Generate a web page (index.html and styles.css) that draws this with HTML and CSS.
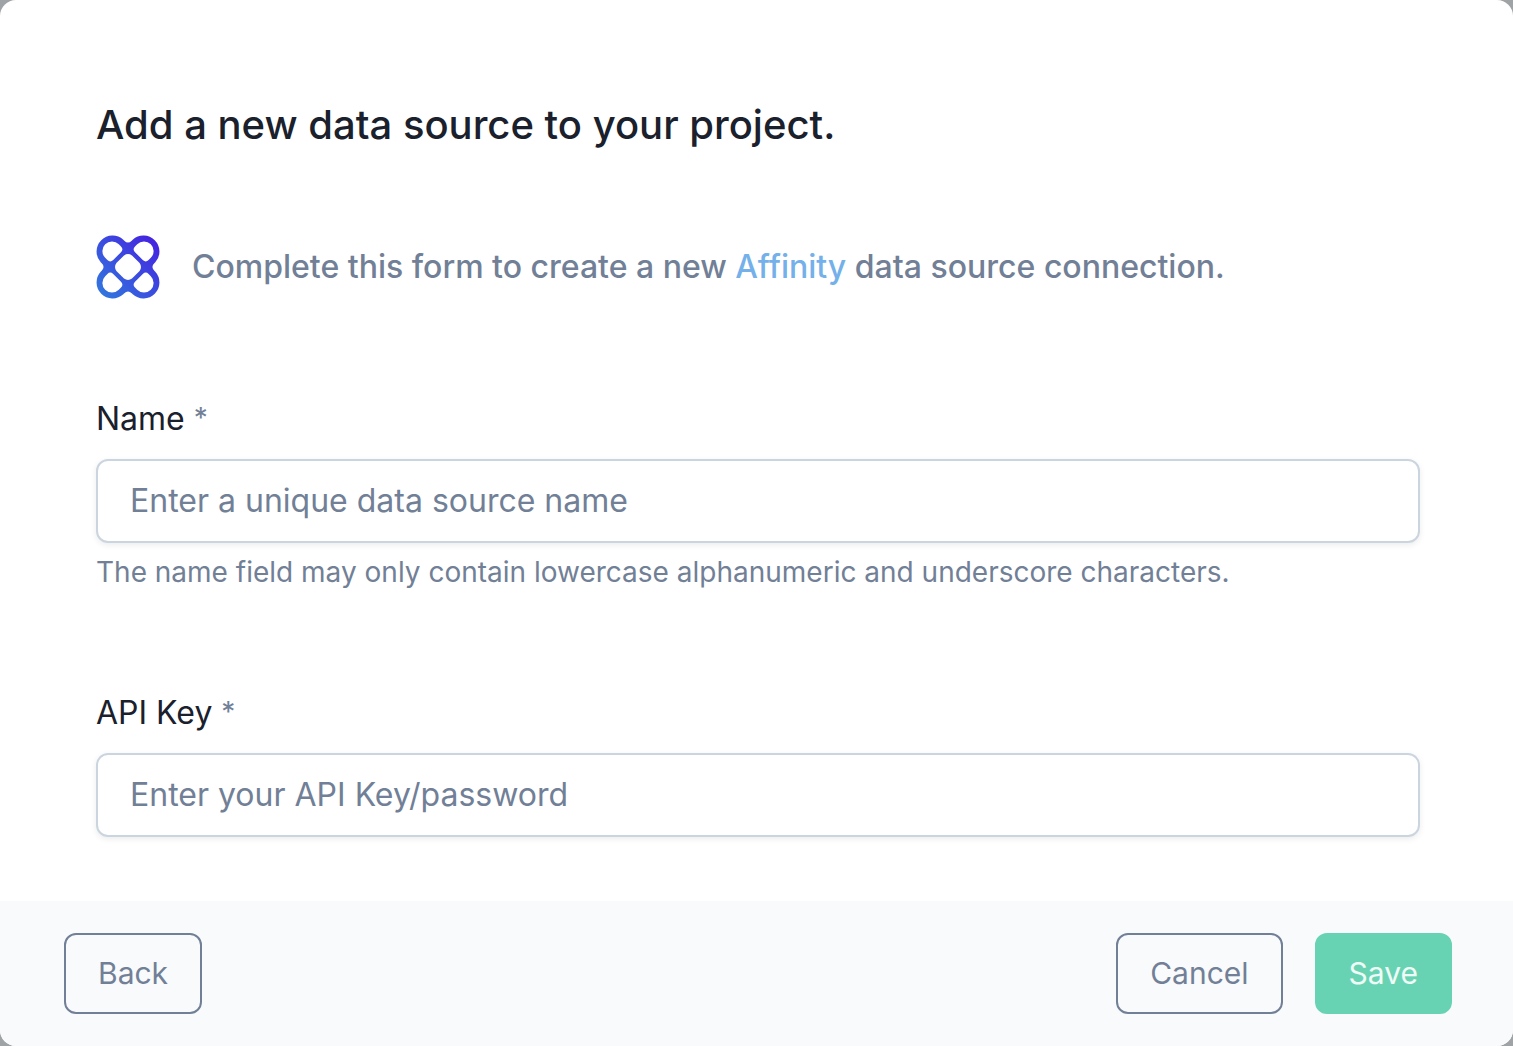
FILE: index.html
```html
<!DOCTYPE html>
<html lang="en">
<head>
<meta charset="utf-8">
<title>Add a data source</title>
<link rel="stylesheet" href="styles.css">
</head>
<body>
<form class="dialog">
  <main class="content">
    <h1 class="title">Add a new data source to your project.</h1>
    <div class="intro">
      <svg class="logo" viewBox="0 0 64 64" aria-hidden="true">
        <defs>
          <linearGradient id="brand" gradientUnits="userSpaceOnUse" x1="6" y1="58" x2="58" y2="6">
            <stop offset="0" stop-color="#3274de"/>
            <stop offset="1" stop-color="#4425e0"/>
          </linearGradient>
        </defs>
        <path fill="url(#brand)" fill-rule="evenodd" d="M27.300 4.700L28.300 5.700Q32 9.400 35.700 5.700L36.700 4.700A16 16 0 0 1 59.300 27.300L58.300 28.300Q54.600 32 58.300 35.700L59.300 36.700A16 16 0 0 1 36.700 59.300L35.700 58.300Q32 54.600 28.300 58.300L27.300 59.300A16 16 0 0 1 4.700 36.700L5.700 35.700Q9.400 32 5.700 28.300L4.700 27.300A16 16 0 0 1 27.300 4.700Z
          M22.800 9.200L25 11.400Q27.800 14.200 25 17.200L17.200 25Q14.200 27.800 11.400 25L9.200 22.800A9.600 9.600 0 0 1 22.800 9.200Z
          M41.200 9.200L39 11.400Q36.200 14.200 39 17.200L46.800 25Q49.800 27.800 52.600 25L54.800 22.800A9.600 9.600 0 0 0 41.200 9.200Z
          M22.800 54.800L25 52.600Q27.800 49.800 25 46.800L17.200 39Q14.200 36.200 11.400 39L9.200 41.200A9.600 9.600 0 0 0 22.800 54.800Z
          M41.200 54.800L39 52.600Q36.200 49.800 39 46.800L46.800 39Q49.800 36.200 52.600 39L54.800 41.200A9.600 9.600 0 0 1 41.200 54.800Z
          M28 20.400Q32 17.600 36 20.400L43.600 28Q46.400 32 43.600 36L36 43.600Q32 46.400 28 43.600L20.400 36Q17.600 32 20.400 28Z"/>
      </svg>
      <p class="lead">Complete this form to create a new <a class="link" href="#affinity">Affinity</a> data source connection.</p>
    </div>
    <div class="field">
      <label class="label" for="name">Name <span class="required">*</span></label>
      <input class="input" id="name" type="text" placeholder="Enter a unique data source name">
      <p class="help">The name field may only contain lowercase alphanumeric and underscore characters.</p>
    </div>
    <div class="field">
      <label class="label" for="key">API Key <span class="required">*</span></label>
      <input class="input" id="key" type="password" placeholder="Enter your API Key/password">
    </div>
  </main>
  <footer class="footer">
    <button class="button" type="button">Back</button>
    <div class="actions">
      <button class="button" type="button">Cancel</button>
      <button class="button primary" type="submit">Save</button>
    </div>
  </footer>
</form>
</body>
</html>
```

FILE: styles.css
```css
* { box-sizing: border-box; }
body {
  margin: 0;
  background: #a0a3a5;
  font-family: Inter, sans-serif;
  color: #1a202c;
}
h1, p { margin: 0; }
.dialog {
  display: flex;
  flex-direction: column;
  min-height: 100vh;
  background: #fff;
  border-radius: 16px;
  overflow: hidden;
}
.content {
  flex: 1;
  padding: 95px 93px 64px 96px;
}
.title {
  font-size: 40px;
  line-height: 60px;
  font-weight: 500;
}
.intro {
  display: flex;
  align-items: center;
  gap: 32px;
  margin: 80px 0 96px;
}
.logo { width: 64px; height: 64px; flex: none; }
.lead {
  font-size: 32px;
  line-height: 48px;
  font-weight: 500;
  color: #718096;
}
.link { color: #74b0ea; text-decoration: none; }
.field + .field { margin-top: 96px; }
.label {
  display: block;
  font-size: 32px;
  line-height: 48px;
}
.required {
  color: #718096;
  font-size: 28px;
  line-height: 1;
  vertical-align: 2px;
}
.input {
  display: block;
  width: 100%;
  height: 84px;
  margin-top: 16px;
  padding: 0 32px 2px;
  border: 2px solid #cbd5e0;
  border-radius: 12px;
  background: #fff;
  box-shadow: 0 2px 6px rgba(0, 0, 0, .08);
  font: 400 32px/48px Inter, sans-serif;
  color: #1a202c;
}
.input::placeholder { color: #718096; opacity: 1; }
.help {
  margin-top: 8px;
  font-size: 28px;
  line-height: 42px;
  color: #718096;
}
.footer {
  display: flex;
  justify-content: space-between;
  padding: 32px 61px 32px 64px;
  background: #f9fafc;
}
.actions { display: flex; gap: 32px; }
.button {
  height: 81px;
  padding: 0 32px;
  border: 2px solid #718096;
  border-radius: 12px;
  background: transparent;
  color: #718096;
  font: 400 30px/45px Inter, sans-serif;
}
.primary { background: #68d3b3; border-color: #68d3b3; color: #f0fbf8; }
```
